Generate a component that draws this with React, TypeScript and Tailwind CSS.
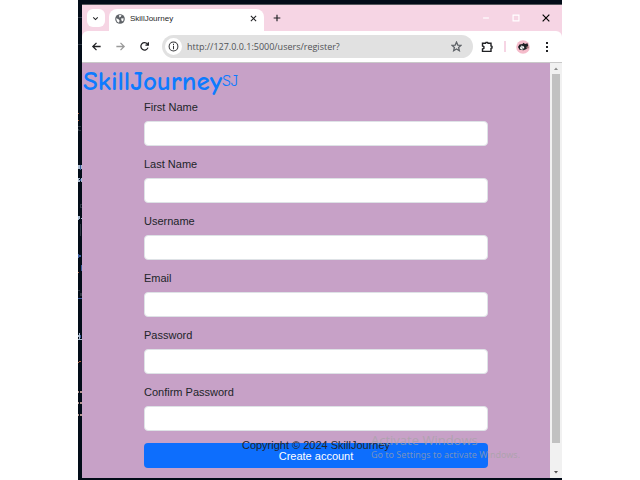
import React from "react";

const fields = [
  { id: "first", label: "First Name", type: "text" },
  { id: "last", label: "Last Name", type: "text" },
  { id: "username", label: "Username", type: "text" },
  { id: "email", label: "Email", type: "email" },
  { id: "password", label: "Password", type: "password" },
  { id: "confirm", label: "Confirm Password", type: "password" },
];

function Stroke({ d, className }: { d: string; className: string }) {
  return (
    <svg viewBox="0 0 12 12" fill="none" stroke="currentColor" strokeWidth="1.4" className={className} aria-hidden="true">
      <path d={d} />
    </svg>
  );
}

function Globe() {
  return (
    <svg viewBox="0 0 10 10" className="size-[10px]" aria-hidden="true">
      <circle cx="5" cy="5" r="4.8" fill="#5f6368" />
      <path d="M1 4.2 3.2 5 4.6 6.4 4 8.8 2 7.6Z M4.2 1 6.5 1.2 5.8 2.8 4.2 3.4Z M6 4.6 8.6 4.2 8.4 6.4 7 7.4 6.4 6Z" fill="#fff" />
    </svg>
  );
}

// Sliver of the code editor that shows behind the left edge of the browser.
function EditorSliver() {
  return (
    <svg viewBox="0 0 4 474" className="h-[474px] w-1 shrink-0" aria-hidden="true">
      <g fill="#b5623f">
        <path d="M0 109h1v1H0ZM0 116h1v1H0ZM0 268h1v1H0ZM1 357h2v1H1ZM0 358h1v1H0Z" />
      </g>
      <g fill="#b3958f">
        <path d="M0 387h1v2H0ZM2 387h2v2H2ZM0 398h1v2H0ZM2 398h2v2H2ZM0 410h1v2H0ZM2 410h2v2H2Z" />
      </g>
      <g fill="#2c3642">
        <path d="M0 13h4v1H0ZM0 40h4v1H0ZM0 122h3v1H2v2H1v1h2v1H0v-2h2v-2H0ZM2 200h2v1H3v2h1v1H2ZM2 220h1v12H2ZM0 286h2v1H0ZM2 289h2v3H2Z" />
      </g>
      <g fill="#a9bad0">
        <path d="M0 161h2v4H0ZM3 161h1v4H3ZM0 174h2v1H1v1h1v2H0ZM3 174h1v4H3ZM0 212h2v3H1v1H0ZM3 214h1v1H3ZM0 331h1v2H0ZM1 329h1v6H1ZM0 335h4v1H0Z" />
      </g>
      <g fill="#3c5c9c">
        <path d="M2 161h1v5H2ZM2 175h1v2H2ZM0 250h1v4H0ZM1 251h2v2H1ZM3 261h1v6H3ZM0 294h4v1H0ZM2 331h1v3H2Z" />
      </g>
    </svg>
  );
}

function TabStrip() {
  return (
    <div className="flex h-[26px] items-stretch bg-[#f6d5e4]">
      <div className="flex w-[27px] items-center justify-center">
        <button aria-label="Search tabs" className="flex size-[18px] items-center justify-center rounded-md bg-white text-[#202124]">
          <Stroke d="M3 4.5 6 7.5 9 4.5" className="size-[9px]" />
        </button>
      </div>
      <div className="mt-1 flex w-[155px] items-center rounded-t-lg bg-white px-[6px] pb-[3px]">
        <Globe />
        <span className="ml-[5px] flex-1 text-[8px] leading-3 text-[#1f1f1f]">SkillJourney</span>
        <button aria-label="Close tab" className="text-[#202124]">
          <Stroke d="M2.5 2.5 9.5 9.5M9.5 2.5 2.5 9.5" className="size-[9px]" />
        </button>
      </div>
      <button aria-label="New tab" className="ml-2 text-[#202124]">
        <Stroke d="M6 2V10M2 6H10" className="size-[10px]" />
      </button>
      <div className="ml-auto flex items-center gap-[20px] pr-[11px]">
        <button aria-label="Minimize" className="text-white">
          <Stroke d="M2.5 6H9.5" className="size-[10px]" />
        </button>
        <button aria-label="Maximize" className="text-white">
          <Stroke d="M2.5 2.5H9.5V9.5H2.5Z" className="size-[10px]" />
        </button>
        <button aria-label="Close" className="text-black">
          <Stroke d="M2 2 10 10M10 2 2 10" className="size-[10px]" />
        </button>
      </div>
    </div>
  );
}

function Toolbar() {
  return (
    <div className="bg-[#f6d5e4]">
      <div className="flex h-[32px] items-center rounded-t-md border-b border-[#c9c9c9] bg-white px-[9px]">
        <button aria-label="Back" className="text-[#202124]">
          <Stroke d="M10.5 6H2.5M6 2 2 6 6 10" className="size-[11px]" />
        </button>
        <button aria-label="Forward" className="ml-[13px] text-[#9a9a9a]">
          <Stroke d="M1.5 6H9.5M6 2 10 6 6 10" className="size-[11px]" />
        </button>
        <button aria-label="Reload" className="ml-[13px] text-[#202124]">
          <Stroke d="M9.8 7.2A4 4 0 1 1 9.2 3.4L10 4.2M10.2 1.4V4.5H7" className="size-[11px]" />
        </button>
        <div className="ml-[12px] flex h-[23px] flex-1 items-center rounded-full bg-[#e1e1e1] pr-[11px] pl-[3px]">
          <span className="flex size-[17px] items-center justify-center rounded-full bg-white text-[#303134]">
            <svg viewBox="0 0 12 12" className="size-[11px]" fill="none" stroke="currentColor" strokeWidth="1.1" aria-hidden="true">
              <circle cx="6" cy="6" r="4.8" />
              <path d="M6 5.3V9M6 3V4.3" />
            </svg>
          </span>
          <input
            aria-label="Address"
            defaultValue="http://127.0.0.1:5000/users/register?"
            className="ml-[5px] min-w-0 flex-1 bg-transparent font-['Open_Sans','Noto_Sans',sans-serif] text-[9px] leading-4 text-[#505256] outline-none"
          />
          <button aria-label="Bookmark" className="text-[#5f6368]">
            <Stroke d="M6 1.2 7.4 4.4 11 4.7 8.3 7.1 9.1 10.6 6 8.7 2.9 10.6 3.7 7.1 1 4.7 4.6 4.4Z" className="size-[11px]" />
          </button>
        </div>
        <button aria-label="Extensions" className="ml-[8px] text-[#202124]">
          <Stroke d="M1.5 2.3H4.6L5 1.4H6.6L7 2.3H10V5L11 5.4V7L10 7.4V10.4H1.5V8L2.9 7.4V5.6L1.5 5Z" className="size-[12px]" />
        </button>
        <span className="ml-[11px] h-[11px] w-[2px] bg-[#f6d5e4]" />
        <button aria-label="Profile" className="ml-[10px]">
          <svg viewBox="0 0 14 14" className="size-[14px]" aria-hidden="true">
            <circle cx="7" cy="7" r="6.8" fill="#f5bccb" />
            <path d="M2 7 3.5 4.5 6.5 4 7.5 2.8 9 4 11.5 3.2 12.3 6 10.5 9 7.5 10.2 3.5 9.8Z" fill="#1f2024" />
            <path d="M3.8 8 5.4 5.6 7.6 6.2 8.4 8 7 9.4 5 9.4Z" fill="#fff" />
            <path d="M5.5 6.5h1v1h-1ZM6.5 8h1v1h-1Z" fill="#333" />
            <circle cx="11.6" cy="7.4" r="1.2" fill="#a8787a" />
          </svg>
        </button>
        <button aria-label="Menu" className="ml-[11px]">
          <svg viewBox="0 0 12 12" className="size-[12px]" fill="#202124" aria-hidden="true">
            <path d="M5 1H7V3H5ZM5 5H7V7H5ZM5 9H7V11H5Z" />
          </svg>
        </button>
      </div>
    </div>
  );
}

function Scrollbar() {
  return (
    <div className="flex w-3 flex-col items-center bg-[#f1f1f1]" aria-hidden="true">
      <svg viewBox="0 0 12 11" className="h-[11px] w-3" fill="#8a8a8a"><path d="M4 7 6 4.5 8 7Z" /></svg>
      <span className="w-2 flex-1 bg-[#c1c1c1]" />
      <span className="h-[24px]" />
      <svg viewBox="0 0 12 11" className="h-[11px] w-3" fill="#505050"><path d="M4 4 6 6.5 8 4Z" /></svg>
    </div>
  );
}

function Page() {
  return (
    <main className="relative min-w-0 flex-1 bg-[#c7a1c7] pb-[10px] text-[#212529]">
      <h1 className="flex h-[36px] pl-px font-['Comic_Sans_MS','Comic_Neue',Lato,sans-serif] text-[27px] leading-[38px] font-bold text-[#0d7bff]">
        <a href="#home">SkillJourney</a>
        <sup className="top-0 text-[16px] leading-[36px] font-normal">SJ</sup>
      </h1>
      <form className="px-[62px] text-[11px] leading-4" onSubmit={(e) => e.preventDefault()}>
        <div className="flex flex-col gap-[10px]">
          {fields.map((f) => (
            <div key={f.id} className="flex flex-col gap-[6px]">
              <label htmlFor={f.id}>{f.label}</label>
              <input id={f.id} type={f.type} className="h-[25px] w-full rounded border border-[#dee2e6] bg-white px-2 outline-none" />
            </div>
          ))}
        </div>
        <button className="mt-3 h-[25px] w-full rounded bg-[#0d6efd] text-center text-white">Create account</button>
      </form>
      <footer className="absolute inset-x-0 bottom-[25px] text-center text-[11px] leading-4">Copyright © 2024 SkillJourney</footer>
    </main>
  );
}

export default function App() {
  return (
    <div className="min-h-screen bg-white px-[78px] font-['Liberation_Sans',Arial,sans-serif]">
      <div className="relative bg-[#020c18] pt-1 pb-[2px]">
        <div className="flex">
          <EditorSliver />
          <div className="min-w-0 flex-1 border-t border-[#55575c]">
            <TabStrip />
            <Toolbar />
            <div className="flex">
              <Page />
              <Scrollbar />
            </div>
          </div>
        </div>
        <aside className="absolute right-[35px] bottom-[18px] w-[156px] font-['Open_Sans','Noto_Sans',sans-serif] text-[#a3a3a3]/70">
          <p className="text-[13px] leading-4">Activate Windows</p>
          <p className="font-['Noto_Sans',sans-serif] text-[9px] leading-[14px] whitespace-nowrap">Go to Settings to activate Windows.</p>
        </aside>
      </div>
    </div>
  );
}
